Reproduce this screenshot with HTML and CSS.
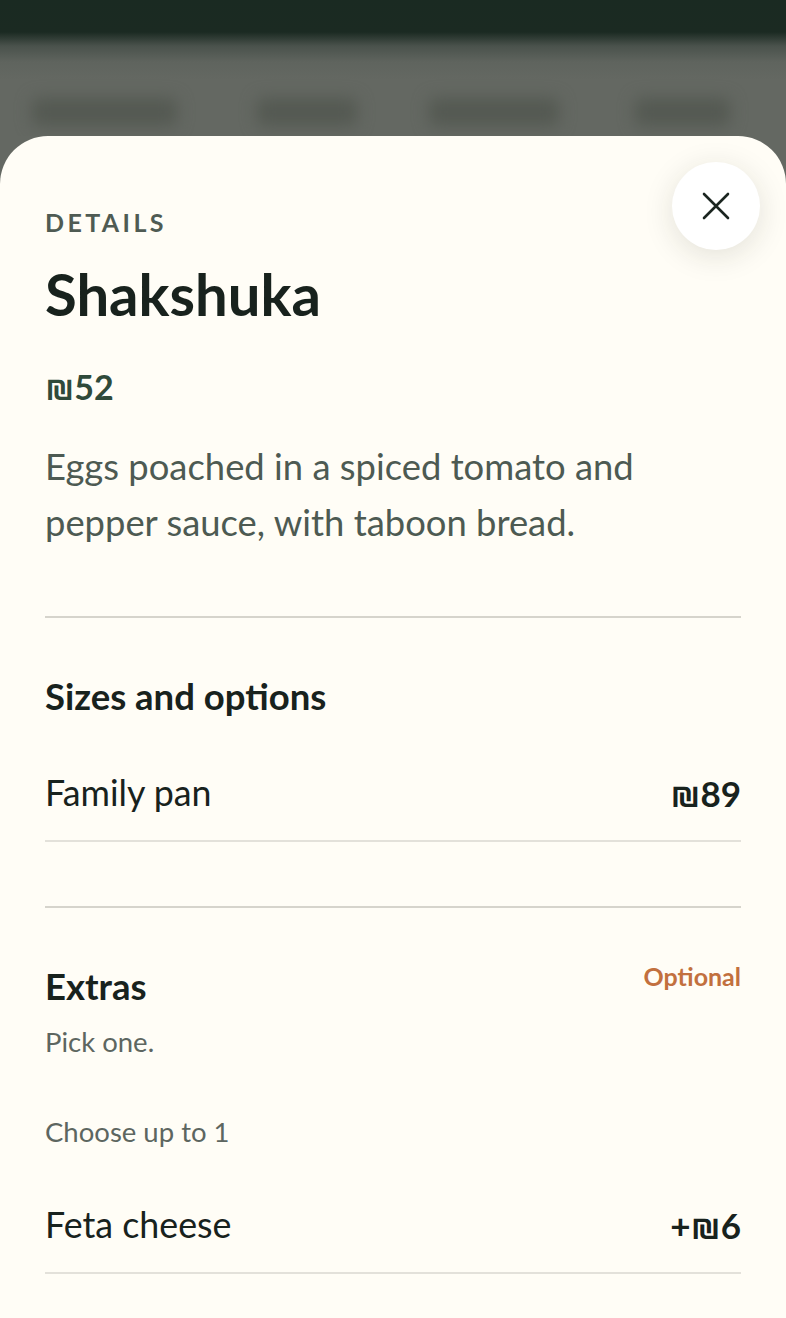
FILE: index.html
```html
<!DOCTYPE html>
<html lang="en">
<head>
<meta charset="utf-8">
<title>Shakshuka details</title>
<link rel="stylesheet" href="styles.css">
</head>
<body>
<div class="backdrop">
  <div class="backdrop-tabs">
    <span class="tab t1"></span>
    <span class="tab t2"></span>
    <span class="tab t3"></span>
    <span class="tab t4"></span>
  </div>
</div>
<main class="sheet">
  <button class="close" aria-label="Close">
    <svg width="28" height="28" viewBox="0 0 28 28" fill="none" stroke="#1b2520" stroke-width="2.6" stroke-linecap="round">
      <path d="M2 2 L26 26 M26 2 L2 26"/>
    </svg>
  </button>
  <div class="eyebrow">DETAILS</div>
  <h1 class="title">Shakshuka</h1>
  <div class="price">₪52</div>
  <p class="desc">Eggs poached in a spiced tomato and pepper sauce, with taboon bread.</p>

  <section class="group">
    <h2 class="group-title">Sizes and options</h2>
    <div class="row">
      <span class="row-name">Family pan</span>
      <span class="row-price">₪89</span>
    </div>
  </section>

  <section class="group">
    <div class="group-head">
      <h2 class="group-title">Extras</h2>
      <span class="badge">Optional</span>
    </div>
    <p class="hint">Pick one.</p>
    <p class="hint limit">Choose up to 1</p>
    <div class="row">
      <span class="row-name">Feta cheese</span>
      <span class="row-price">+₪6</span>
    </div>
  </section>
</main>
</body>
</html>
```
FILE: styles.css
```css
html, body {
  margin: 0;
  padding: 0;
}
body {
  background: #646862;
  font-family: Lato, "DejaVu Sans", sans-serif;
  color: #1b2520;
  overflow: hidden;
}
.backdrop {
  height: 136px;
  background: linear-gradient(to bottom, #1a2a22 0px, #1b2a22 32px, #4a524c 46px, #5f645e 62px, #646862 80px);
  overflow: hidden;
}
.backdrop-tabs {
  display: flex;
  padding-top: 98px;
  filter: blur(8px);
}
.tab {
  display: block;
  height: 28px;
  background: #545952;
  border-radius: 6px;
}
.t1 { width: 145px; margin-left: 32px; }
.t2 { width: 100px; margin-left: 80px; }
.t3 { width: 130px; margin-left: 72px; }
.t4 { width: 95px; margin-left: 76px; }

.sheet {
  position: relative;
  background: #fffdf6;
  border-radius: 48px 48px 0 0;
  padding: 71px 45px 0 45px;
  min-height: 1182px;
  box-sizing: border-box;
}
.close {
  position: absolute;
  top: 26px;
  right: 26px;
  width: 88px;
  height: 88px;
  border-radius: 50%;
  border: none;
  background: #ffffff;
  box-shadow: 0 6px 30px rgba(40, 40, 20, 0.13);
  display: flex;
  align-items: center;
  justify-content: center;
  padding: 0;
}
.eyebrow {
  font-size: 25px;
  line-height: 30px;
  font-weight: 700;
  letter-spacing: 3.4px;
  color: #4f5b53;
}
.title {
  margin: 22px 0 0 0;
  font-size: 58px;
  line-height: 70px;
  font-weight: 700;
  color: #18221d;
}
.price {
  margin-top: 38px;
  font-size: 34px;
  line-height: 40px;
  font-weight: 700;
  color: #2f4a3a;
}
.desc {
  margin: 31px 0 0 0;
  font-size: 36.4px;
  line-height: 56px;
  color: #4d5a52;
  max-width: 620px;
}
.group {
  margin-top: 66px;
  border-top: 2px solid #d6d4cc;
}
.group + .group {
  margin-top: 64px;
}
.group-title {
  margin: 56px 0 0 0;
  font-size: 36.5px;
  line-height: 44px;
  font-weight: 700;
  color: #18221d;
}
.group-head {
  display: flex;
  justify-content: space-between;
  align-items: flex-start;
}
.badge {
  margin-top: 53px;
  font-size: 25px;
  line-height: 30px;
  font-weight: 700;
  color: #c2703e;
}
.hint {
  margin: 16px 0 0 0;
  font-size: 27.5px;
  line-height: 36px;
  color: #5d6660;
}
.hint.limit {
  margin-top: 54px;
}
.row {
  display: flex;
  justify-content: space-between;
  align-items: center;
  margin-top: 26px;
  padding: 27px 0 25px 0;
  border-bottom: 2px solid #e3e1da;
}
.row-name {
  font-size: 35.8px;
  line-height: 44px;
  color: #18221d;
}
.row-price {
  font-size: 35px;
  line-height: 44px;
  font-weight: 700;
  color: #18221d;
}
```
